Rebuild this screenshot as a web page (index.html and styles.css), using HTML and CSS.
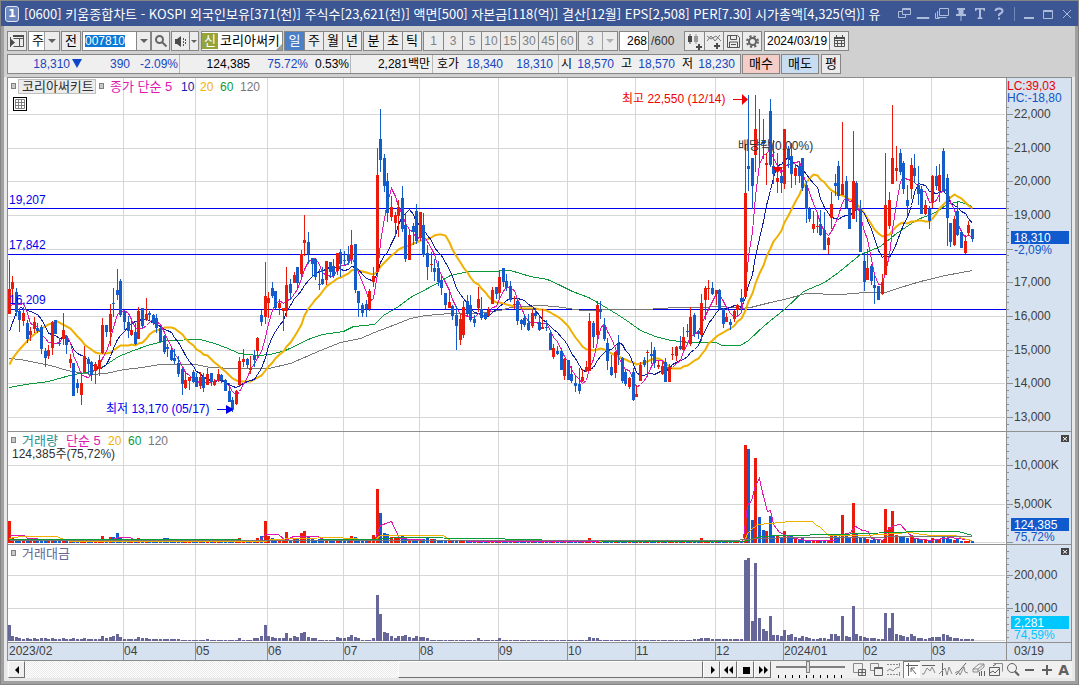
FILE: index.html
```html
<!DOCTYPE html>
<html lang="ko">
<head>
<meta charset="utf-8">
<title>키움종합차트</title>
<link rel="stylesheet" href="styles.css">
</head>
<body>
<div class="window">
  <header class="titlebar">
    <span class="badge">1</span>
    <h1 class="title">[0600] 키움종합차트 - KOSPI 외국인보유[371(천)] 주식수[23,621(천)] 액면[500] 자본금[118(억)] 결산[12월] EPS[2,508] PER[7.30] 시가총액[4,325(억)] 유</h1>
    <div class="winbtns">
      <button aria-label="창 분리"><svg width="14" height="14"><path d="M5.500 1.500h8v6h-8zM5 4.500H1.500v6h7V8M5.500 2.500h8"/></svg></button>
      <button aria-label="접기"><svg width="14" height="14"><path d="M1 10.500h12v1H1z"/></svg></button>
      <button aria-label="복제"><svg width="14" height="14"><path d="M4.500 1.500h9v7h-9zM2.500 4v6.500h9M.500 6v5.500h4"/></svg></button>
      <button aria-label="고정"><svg width="14" height="14"><path class="solid" d="M3 1h8v2H9.500v4H12v2H2V7h2.500V3H3zM6.500 9h1v5h-1z"/></svg></button>
      <button aria-label="글꼴"><svg width="14" height="14"><path class="solid" d="M2 1h10v3h-1l-1-1.500H8V10l1.500 1v1h-5v-1L6 10V2.500H4L3 4H2z"/></svg></button>
      <button aria-label="도움말"><svg width="14" height="14"><path class="thick" d="M3.500 4Q3.500 1.500 7 1.500T10.500 4Q10.500 5.500 8.500 6.500T7 9M7 10.500v2"/></svg></button>
      <i class="sep"></i>
      <button aria-label="최소화"><svg width="14" height="14"><path class="solid" d="M2 10h10v2H2z"/></svg></button>
      <button aria-label="최대화"><svg width="14" height="14"><path d="M2.500 3.500h9v8h-9zM2 4.500h10"/></svg></button>
      <button aria-label="닫기"><svg width="14" height="14"><path d="M3 3l8 8M11 3l-8 8"/></svg></button>
    </div>
  </header>

  <main class="content">
    <section class="tools">
      <div class="row">
        <button class="box sq" aria-label="메뉴"><svg width="16" height="14"><path class="g" d="M4.500 2.500h10v10h-10M4.500 4.500h10M10.500 5v7"/><path class="gs" d="M4 1h11v2H4zM1 3h1v10H1zM2 5l4 3.500L2 12z"/></svg></button>
        <div class="combo white w-a"><select aria-label="종목 구분"><option>주</option></select><span class="arrow"></span></div>
        <button class="box sq">전</button>
        <div class="group white code"><input type="text" value="007810" aria-label="종목코드"><button aria-label="목록"><span class="tri"></span></button></div>
        <button class="box sq find" aria-label="검색"><svg width="14" height="14"><circle class="g2" cx="5.500" cy="5.500" r="3.500"/><path class="g2" d="M8 8l4.500 4.500"/></svg></button>
        <div class="group sound"><button aria-label="소리"><svg width="15" height="14"><path class="gs" d="M2 5h2l4-3v11L4 10H2z"/><path class="g dash" d="M10.500 4v8M12.500 5v6"/></svg></button><button aria-label="소리 목록"><span class="tri sm"></span></button></div>
        <div class="box white name"><b>신</b><span>코리아써키</span><i></i></div>
        <div class="group seg"><button class="on">일</button><button>주</button><button>월</button><button>년</button></div>
        <div class="group seg"><button>분</button><button>초</button><button>틱</button></div>
        <div class="group seg dim"><button>1</button><button>3</button><button>5</button><button>10</button><button>15</button><button>30</button><button>45</button><button>60</button></div>
        <div class="combo dim w-b"><select aria-label="분 주기"><option>3</option></select><span class="arrow"></span></div>
        <label class="count"><input class="box white" type="text" value="268" aria-label="봉 개수"><span>/600</span></label>
        <div class="group seg icons">
          <button aria-label="차트 추가"><svg width="17" height="17"><path class="gs" d="M2 3h4v6H2zM3.500 1h1v10h-1z"/><path class="gl" d="M8 3h4v6H8zM9.500 1h1v10h-1z"/><path class="gs" d="M10 13h6v2h-6zM12 11h2v6h-2z"/></svg></button>
          <button aria-label="지표 추가"><svg width="17" height="17"><path class="g thin" d="M1 8l4-5 4 5 5-6M1 3l4 3 5-3 5 5"/><path class="gs" d="M8 12h6v2H8zM10 10h2v6h-2z"/></svg></button>
          <button aria-label="저장"><svg width="17" height="17"><path class="g" d="M2.500 2.500h10l2 2v10h-12zM5.500 2.500v4h6v-4M4.500 14v-5h8v5M6 11.500h5"/></svg></button>
          <button aria-label="설정"><svg width="17" height="17"><circle class="gear" cx="8.500" cy="8.500" r="5"/><circle class="g2" cx="8.500" cy="8.500" r="3.500"/></svg></button>
        </div>
        <div class="group white date"><input type="text" value="2024/03/19" aria-label="날짜"><button aria-label="달력"><svg width="13" height="13"><path class="g" d="M1.500 2.500h10v9h-10zM1 5.500h11M4.500 6v5M8.500 6v5M1 8.500h10"/><path class="gs" d="M1 2h11v2H1zM3 0h1v2H3zM9 0h1v2H9z"/></svg></button></div>
      </div>
      <div class="row">
        <div class="quote box">
          <div class="cell c1 down"><span>18,310<i class="fall"></i></span><span>390</span><span>-2.09%</span></div>
          <div class="cell c2"><span>124,385</span><span class="down">75.72%</span><span>0.53%</span></div>
          <div class="cell c3"><span>2,281백만</span></div>
          <div class="cell c4"><span>호가</span><span class="down">18,340</span><span class="down">18,310</span></div>
          <div class="cell c5"><span>시</span><span class="down">18,570</span><span>고</span><span class="down">18,570</span><span>저</span><span class="down">18,230</span></div>
        </div>
        <button class="box buy">매수</button>
        <button class="box sell">매도</button>
        <button class="box sq">평</button>
      </div>
    </section>

    <section class="frame">
      <div class="panel price">
        <svg class="plot" viewBox="8 78 998 353" preserveAspectRatio="none" id="price">
          <g class="grid" id="price-grid"></g>
          <g class="levels"><path d="M8 208.500h998M8 254.500h998M8 309.500h998"/></g>
          <g id="price-data"></g>
          <g class="blue"><text x="9" y="204">19,207</text><text x="9" y="249">17,842</text><text x="9" y="304">16,209</text><text x="106" y="413">최저 13,170 (05/17)</text><path d="M217 409h9v-4l8 4.500-8 4.500v-4h-9z"/></g>
          <g class="red"><text x="622" y="103">최고 22,550 (12/14)</text><path d="M733 99h9v-5l6 5.500-6 5.500v-5h-9zM772 167h11l-5.500 6z"/></g>
          <text class="dark" x="738" y="150">배당락(0.00%)</text>
          <g class="mark"><rect x="11.500" y="83.500" width="4" height="5"/><rect x="99.500" y="83.500" width="4" height="5"/></g>
          <rect class="tag" x="18.500" y="79.500" width="77" height="14"/>
          <text class="dark ko" x="22" y="91">코리아써키트</text>
          <text class="t5 ko" x="110" y="91">종가 단순 5</text><text class="t10" x="181" y="91">10</text><text class="t20" x="200" y="91">20</text><text class="t60" x="220" y="91">60</text><text class="t120" x="240" y="91">120</text>
          <g class="tableicon"><rect x="13.500" y="97.500" width="13" height="13"/><path d="M15.500 99.500h9v9h-9zM15.500 102.500h9M15.500 105.500h9M18.500 99.500v9M21.500 99.500v9"/></g>
        </svg>
        <svg class="axis" viewBox="1007 78 64 353" id="price-axis">
          <text class="red" x="1007" y="90">LC:39,03</text><text class="down" x="1007" y="102">HC:-18,80</text>
          <text class="down" x="1014" y="254">-2,09%</text>
          <rect class="now" x="1011" y="231" width="58" height="13"/><text class="white" x="1014" y="242">18,310</text>
        </svg>
      </div>
      <div class="panel volume">
        <svg class="plot" viewBox="8 432 998 112" preserveAspectRatio="none">
          <g class="grid" id="volume-grid"></g>
          <g id="volume-data"></g>
          <g class="mark"><rect x="11.500" y="437.500" width="4" height="5"/></g>
          <text class="teal ko" x="22" y="445">거래량</text><text class="t5 ko" x="66" y="445">단순 5</text><text class="t20" x="108" y="445">20</text><text class="t60" x="128" y="445">60</text><text class="t120" x="148" y="445">120</text>
          <text class="dark" x="12" y="458">124,385주(75,72%)</text>
        </svg>
        <svg class="axis" viewBox="1007 432 64 112" id="volume-axis">
          <text class="down" x="1014" y="541">75,72%</text>
          <rect class="now" x="1011" y="518" width="58" height="13"/><text class="white" x="1014" y="529">124,385</text>
          <rect class="xbox" x="1061" y="435" width="8" height="7"/><path class="xmark" d="M1063 437l4 3.500M1067 437l-4 3.500"/>
        </svg>
      </div>
      <div class="panel amount">
        <svg class="plot" viewBox="8 545 998 97" preserveAspectRatio="none">
          <g class="grid" id="amount-grid"></g>
          <g id="amount-data" class="amt"></g>
          <g class="mark"><rect x="11.500" y="550.500" width="4" height="5"/></g>
          <text class="amt ko" x="22" y="558">거래대금</text>
        </svg>
        <svg class="axis" viewBox="1007 545 64 97" id="amount-axis">
          <text class="cyan" x="1014" y="639">74,59%</text>
          <rect class="cyan" x="1011" y="616" width="58" height="13"/><text class="white" x="1014" y="627">2,281</text>
          <rect class="xbox" x="1061" y="548" width="8" height="7"/><path class="xmark" d="M1063 550l4 3.500M1067 550l-4 3.500"/>
        </svg>
      </div>
      <div class="panel time">
        <svg class="plot" viewBox="8 643 998 17" preserveAspectRatio="none" id="time"></svg>
        <svg class="axis" viewBox="1007 643 64 17"><text class="lab" x="1014" y="655">03/19</text></svg>
      </div>
    </section>

    <footer class="bottom">
      <div class="scroll">
        <button aria-label="왼쪽"><svg width="14" height="14"><path d="M9 3v8L5 7z"/></svg></button>
        <div class="track"><div class="thumb"></div></div>
        <button aria-label="오른쪽"><svg width="14" height="14"><path d="M6 3v8l4-4z"/></svg></button>
        <button aria-label="처음"><svg width="14" height="14"><path d="M6 3v8L2 7zM11 3v8L7 7z"/></svg></button>
        <button aria-label="정지"><svg width="14" height="14"><path d="M4 4h7v7H4z"/></svg></button>
        <button aria-label="끝"><svg width="14" height="14"><path d="M3 3v8l4-4zM8 3v8l4-4z"/></svg></button>
      </div>
      <div class="zoombar"><input type="range" min="0" max="100" value="46" aria-label="확대 비율"></div>
      <div class="draw">
        <button aria-label="새 창"><svg width="16" height="16"><path d="M1.500 1.500h9v9h-9z"/><path class="d" d="M6.500 7.500h7v6h-7zM10 7v7M6 10.500h8"/></svg></button>
        <button aria-label="겹침"><svg width="16" height="16"><path d="M1.500 1.500h8v7h-8z"/><path class="d fill" d="M5.500 5.500h8v8h-8zM5 6.500h9"/></svg></button>
        <button aria-label="구간"><svg width="16" height="16"><path class="dot" d="M1 2.500h13M1 12.500h13"/><path d="M1 9l3-2 3 2 3-3 4-1M13.500 1v3M13.500 10v4"/></svg></button>
        <button class="on" aria-label="선택"><svg width="16" height="16"><path class="d" d="M2 3.500h12M4.500 1v13M7 6l5 6M7 10V6h4"/></svg></button>
        <button aria-label="수평선"><svg width="16" height="16"><path class="d" d="M1 3.500h13"/><path d="M1 12h2l3-6 3 3 2-4 3 6"/></svg></button>
        <button aria-label="수직선"><svg width="16" height="16"><path class="d" d="M4.500 1v13"/><path d="M1 12l3-3 3-3 2 7 2-8 3 7"/></svg></button>
        <button aria-label="추세선"><svg width="16" height="16"><path class="d" d="M2 13L12 1"/><path d="M1 11l3-2 2 4 4-8 1 5 3 1"/></svg></button>
        <button aria-label="지우기"><svg width="16" height="16"><path d="M2 7l6-5h5v3l-6 5H2zM2 7h5v3M7 7l6-5"/><path class="d" d="M8.500 10v4M10.500 9v5M13.500 9v5"/></svg></button>
        <button aria-label="차트 비교"><svg width="16" height="16"><path d="M5.500 1.500h9v8"/><path class="d" d="M1.500 5.500h10v8h-10zM2 11l3-2 2 2 4-4M5 4l3-2"/></svg></button>
        <button aria-label="돋보기"><svg width="16" height="16"><circle class="d" cx="7" cy="6" r="4.500"/><path class="w" d="M10 9.500l4 4"/></svg></button>
        <button aria-label="축소"><svg width="16" height="16"><path class="w" d="M3 8h9"/></svg></button>
        <button aria-label="확대"><svg width="16" height="16"><path class="w" d="M3 8h10M8 3v10"/></svg></button>
        <button class="auto">A</button>
      </div>
    </footer>
  </main>
</div>
<script src="chart.js"></script>
</body>
</html>
```

FILE: styles.css
```css
* { box-sizing: border-box; }
body, button, input, select, svg text {
  font-family: "Liberation Sans", "Noto Sans CJK KR", sans-serif;
  font-size: 12px;
  font-weight: 400;
}
body { margin: 0; color: #000; line-height: 16px; }
button, input, select { margin: 0; padding: 0; border: 0; background: none; color: inherit; line-height: 16px; border-radius: 0; }
button { display: flex; align-items: center; justify-content: center; }
svg { display: block; flex: none; }

.window { min-height: 100vh; border: 1px solid #858585; background: #e8e8e8; display: flex; flex-direction: column; }
.titlebar { height: 25px; background: #3b5692; color: #fff; display: flex; align-items: center; padding: 0 4px; }
.badge { width: 14px; height: 16px; border: 1px solid #e0e6f4; border-radius: 3px; background: #6f88bd; font: bold 11px/14px "DejaVu Sans", sans-serif; text-align: center; flex: none; }
.title { margin: 0 0 0 5px; flex: 1; min-width: 0; overflow: hidden; white-space: nowrap; font: 400 13px/20px "Noto Sans CJK KR", sans-serif; }
.winbtns { display: flex; align-items: center; gap: 5px; margin-left: 5px; }
.winbtns svg { fill: none; stroke: #aebcdc; }
.winbtns .solid { fill: #aebcdc; stroke: none; }
.winbtns .thick { stroke-width: 2; }
.sep { width: 1px; height: 14px; margin: 0 2px 0 3px; background: #7289b8; }
.winbtns button { width: 14px; }

.content { flex: 1; border: 3px solid #a0a0a0; border-top: 0; padding-bottom: 3px; }
.tools { background: #d0d0d0; padding: 5px 3px 2px; display: flex; flex-direction: column; gap: 3px; height: 51px; }
.row { display: flex; gap: 1px; height: 20px; }
.row button, .row select, .name { font-size: 13px; }
.box, .group, .combo { border: 1px solid #868686; background: #ececec; height: 20px; flex: none; }
.box.white, .group.white, .combo.white { background: #fff; }
.sq { width: 20px; }
.group { display: flex; }
.group button { background: #ececec; border-left: 1px solid #868686; height: 18px; }
.group button:first-child { border-left: 0; }
.combo { position: relative; }
.combo select { appearance: none; width: 100%; height: 18px; padding-left: 3px; opacity: 1; }
.arrow { position: absolute; top: 0; right: 0; width: 15px; height: 18px; border-left: 1px solid #a0a0a0; background: #ececec; pointer-events: none; }
.arrow::after, .tri { content: ""; display: block; width: 0; border: 4px solid transparent; border-top-color: #606060; border-bottom: 0; }
.arrow::after { margin: 7px 0 0 3px; }
.tri.sm { border-width: 3px 3px 0; }
.w-a { width: 32px; }
.w-b { width: 40px; }
.row .w-b select { padding-left: 8px; font-size: 12px; }
.dim { color: #808080; }
.dim .arrow::after { border-top-color: #b0b0b0; }
.code { width: 69px; }
.code input { width: 53px; padding-left: 2px; color: #fff; background: linear-gradient(#0a78d6, #0a78d6) 2px 3px / 40px 12px no-repeat #fff; }
.code button { width: 14px; }
.find { width: 19px; margin-left: -1px; }
.sound { width: 28px; }
.sound button:first-child { width: 17px; }
.sound button:last-child { width: 9px; }
.name { width: 82px; display: flex; align-items: center; overflow: hidden; position: relative; white-space: nowrap; margin-left: 1px; }
.name b { width: 16px; height: 16px; background: #94a33a; color: #fff; font-weight: 400; text-align: center; flex: none; margin-right: 2px; }
.name i { position: absolute; right: 0; bottom: 0; border: 3px solid #a0a0a0; border-top-color: transparent; border-left-color: transparent; }
.seg button { width: 19px; }
.seg .on { background: #4a80c8; color: #fff; }
.row .dim button { font-size: 12px; }
.count { display: flex; align-items: center; width: 64px; }
.count input { width: 30px; text-align: right; padding-right: 1px; }
.count span { margin-left: 2px; color: #333; }
.icons { width: 78px; }
.date { width: 85px; margin-left: 1px; }
.date input { width: 64px; padding-left: 2px; }
.date button { width: 19px; }
.tools svg { fill: none; }
.tools .g { stroke: #555; }
.tools .g2 { stroke: #666; stroke-width: 2; }
.tools .thin { stroke: #777; }
.tools .dash { stroke-dasharray: 2 1; }
.tools .gs { fill: #4a4a4a; }
.tools .gl { fill: #999; }
.tools .gear { stroke: #666; stroke-width: 3; stroke-dasharray: 2 2; }

.quote { width: 734px; display: flex; white-space: nowrap; background: #efefef; line-height: 18px; }
.cell { display: grid; border-right: 1px solid #b8b8b8; text-align: right; }
.cell:last-child { border: 0; }
.c1 { width: 172px; grid-template-columns: 74px 48px 48px; }
.c2 { width: 171px; grid-template-columns: 70px 58px 41px; }
.c3 { width: 82px; grid-template-columns: 79px; }
.c4 { width: 126px; grid-template-columns: 26px 44px 50px; }
.c5 { grid-template-columns: 13px 42px 18px 43px 18px 42px; }
.down { color: #1646c0; fill: #0f55c8; }
.fall { display: inline-block; margin-left: 2px; border: 5px solid transparent; border-top: 9px solid #0f46c8; border-bottom: 0; }
.buy, .sell { width: 38px; background: #f4cdc8; }
.sell { background: #c8ddf2; margin-right: 1px; }

.frame { margin: 0 3px; border: 1px solid #8c8c8c; background: #fff; }
.panel { display: flex; border-bottom: 1px solid #909090; }
.panel:last-child { border-bottom: 0; }
.plot { flex: 1 1 0; min-width: 0; }
.axis { width: 65px; border-left: 1px solid #909090; background: #d7e2f0; }
.panel.price svg { height: 353px; }
.panel.volume svg { height: 112px; }
.panel.amount svg { height: 97px; }
.panel.time svg { height: 17px; }
.panel.time { background: #d7e2f0; }
svg .ko { font-size: 13px; }
.grid path { stroke: #d6d6d6; fill: none; }
.levels path { stroke: #0000f0; }
.blue { fill: #0000f0; }
.red { fill: #f00000; }
.dark { fill: #303030; }
.lab { fill: #404040; }
text.white { fill: #fff; }
.teal { fill: #2a8f8f; }
.cyan { fill: #00c8ff; }
.now { fill: #0f5acd; }
.amt { fill: #666698; }
.up-bar { fill: #eb1b0c; }
.down-bar { fill: #145ccc; }
.mark rect { fill: #c8c8c8; stroke: #808080; }
.tag { fill: #ececec; stroke: #c0c0c0; }
.tableicon rect { fill: #fff; stroke: #000; }
.tableicon path { fill: none; stroke: #808080; }
.xbox { fill: #444; }
.xmark { stroke: #fff; }
.t5 { fill: #e016b0; }
.t10 { fill: #1020a8; }
.t20 { fill: #f0b000; }
.t60 { fill: #0a9a3a; }
.t120 { fill: #777; }
.line { fill: none; shape-rendering: crispEdges; }
.line.t5 { stroke: #e016b0; }
.line.t10 { stroke: #1020a0; }
.line.t20 { stroke: #f0b000; }
.line.t60 { stroke: #0a9a3a; }
.line.t120 { stroke: #777; }
.line.bold { stroke-width: 2; shape-rendering: auto; }
.tick { stroke: #909090; }

.bottom { display: flex; height: 17px; margin: 0 3px; background: #f0f0f0; }
.scroll { flex: 1; display: flex; padding-left: 1px; }
.scroll button { width: 17px; background: #f0f0f0; border: 1px solid #fff; border-right-color: #707070; border-bottom-color: #707070; }
.track { flex: 1; display: flex; justify-content: flex-end; background: conic-gradient(#fff 25%, #eaeaea 0 50%, #fff 0 75%, #eaeaea 0) 0 0 / 2px 2px; }
.thumb { width: 45%; min-width: 20px; background: #efefef; border: 1px solid #fff; border-right-color: #707070; border-bottom-color: #707070; }
.zoombar { width: 79px; padding: 0 5px; background: repeating-linear-gradient(90deg, #000 0 1px, transparent 1px 7px) 7px 14px / 68px 3px no-repeat; }
.zoombar input { appearance: none; display: block; width: 69px; height: 12px; background: linear-gradient(#808080, #808080) 0 5px / 100% 2px no-repeat; }
.zoombar input::-webkit-slider-thumb { appearance: none; width: 4px; height: 12px; background: #e0e0e0; border: 1px solid #808080; }
.draw { display: flex; width: 222px; padding-left: 2px; }
.draw button { flex: 1; height: 17px; }
.draw .on { background: #fff; border-left: 1px solid #808080; border-top: 1px solid #808080; }
.draw svg { fill: none; stroke: #8a8a8a; }
.draw .d { stroke: #606060; }
.draw .fill { fill: #f0f0f0; }
.draw .dot { stroke-dasharray: 2 1; }
.draw .w { stroke: #606060; stroke-width: 2; }
.draw .auto { font: bold 14px/16px "DejaVu Sans", sans-serif; color: #606060; }
```

FILE: chart.js
```js
// x, high, body top, body bottom, low, direction (1 = up, 0 = down)
const candles = [
[9,260,289,314,314,1],[12,276,282,289,303,1],[16,288,292,312,316,0],[19,308,311,320,332,0],[23,307,313,321,326,1],[27,320,323,339,343,0],[30,327,331,335,341,1],[34,317,322,329,333,1],[37,323,328,331,333,0],[41,325,327,349,354,0],
[45,348,351,358,367,0],[48,345,350,356,359,1],[52,321,322,348,355,1],[55,320,320,334,334,0],[59,338,343,344,346,0],[63,313,330,339,345,1],[66,335,336,345,354,0],[70,354,359,363,368,1],[73,363,363,396,396,0],[77,379,383,388,393,0],
[81,373,383,395,405,1],[84,346,356,372,372,1],[88,357,359,364,374,0],[91,361,362,375,381,0],[95,362,364,371,384,1],[99,355,360,369,376,1],[102,318,325,353,354,1],[106,325,325,332,337,0],[110,304,314,332,346,1],[113,288,303,304,317,0],
[117,269,290,295,300,0],[120,279,281,315,317,0],[124,311,311,322,330,0],[128,316,322,331,338,0],[131,321,330,335,336,1],[135,323,332,344,345,0],[138,307,311,339,339,1],[142,308,308,326,328,0],[146,298,314,320,321,1],[149,311,313,315,320,0],
[153,314,315,323,325,0],[156,314,318,328,333,0],[160,327,328,342,342,0],[164,335,336,352,354,0],[167,344,347,349,357,0],[171,346,350,360,361,0],[174,349,358,361,364,0],[178,356,363,374,377,0],[182,368,369,384,395,0],[185,371,380,388,389,1],
[189,377,377,381,390,1],[193,370,372,382,383,0],[196,373,377,387,387,0],[200,372,377,386,389,1],[203,373,377,388,392,0],[207,368,374,385,385,1],[211,373,373,382,386,0],[214,379,381,385,386,1],[218,369,374,381,382,1],[221,374,375,380,383,0],
[225,379,380,391,391,0],[229,383,391,402,402,0],[232,397,400,409,412,0],[236,390,391,404,405,1],[239,357,361,385,387,1],[243,349,359,362,367,1],[247,358,359,365,368,0],[250,356,368,370,374,1],[254,350,355,360,367,0],[257,337,338,351,357,1],
[261,310,315,322,326,0],[265,262,296,317,324,1],[268,292,298,303,318,1],[272,282,288,296,298,0],[275,291,291,308,309,0],[279,299,303,308,315,1],[283,308,308,311,331,1],[286,267,285,311,317,1],[290,279,284,293,300,0],[294,272,275,283,283,1],
[297,267,267,283,288,0],[301,250,254,274,278,1],[304,215,240,243,256,1],[308,232,242,254,264,0],[312,258,258,264,277,0],[315,258,259,277,280,0],[319,269,284,285,290,0],[322,267,279,284,285,0],[326,261,261,280,285,1],[330,262,262,272,278,0],
[333,259,266,276,278,0],[337,253,253,271,275,1],[340,249,252,264,277,0],[344,251,260,261,265,0],[348,246,254,261,265,0],[351,230,245,259,264,1],[355,244,244,290,293,0],[358,291,291,303,317,0],[362,303,305,313,317,0],[366,300,304,309,317,0],
[369,289,291,309,311,1],[373,267,276,282,287,1],[377,148,175,272,272,1],[380,109,139,160,172,0],[384,154,158,186,192,0],[387,173,181,213,222,0],[391,196,207,217,221,1],[395,212,215,223,237,1],[398,200,207,216,237,1],[402,186,198,229,232,0],
[405,214,225,259,262,0],[409,229,235,260,260,1],[413,223,226,232,245,0],[416,204,211,241,244,0],[420,212,212,238,241,1],[423,213,225,255,257,0],[427,245,253,267,280,0],[431,252,264,265,272,1],[434,259,268,272,281,0],[438,261,268,282,286,0],
[441,276,280,288,295,0],[445,293,293,305,309,0],[449,289,302,308,308,1],[452,305,306,316,320,0],[456,306,315,326,350,0],[460,314,319,340,345,1],[463,301,307,335,338,1],[467,295,301,314,317,0],[470,295,305,320,322,0],[474,315,319,323,327,0],
[478,287,299,308,312,1],[481,297,309,318,320,0],[485,313,313,319,320,0],[488,307,310,316,316,1],[492,287,290,304,304,1],[496,287,287,294,299,0],[499,270,277,293,298,1],[503,268,268,282,287,0],[506,274,281,287,291,0],[510,281,286,300,302,0],
[514,296,304,305,309,1],[517,300,301,321,325,0],[521,319,320,324,330,0],[524,315,318,325,327,0],[528,314,323,330,331,0],[532,310,313,326,328,1],[535,308,313,316,319,0],[539,316,322,330,331,0],[542,309,327,329,329,1],[546,320,327,328,331,0],
[550,330,333,350,350,0],[553,344,348,357,359,1],[557,346,351,354,355,0],[561,348,351,370,370,0],[564,358,359,376,380,1],[568,360,360,380,380,0],[571,366,374,381,383,0],[575,375,383,386,392,0],[579,368,384,391,394,0],[582,369,377,381,382,1],
[586,361,367,371,372,1],[589,313,321,371,371,1],[593,321,323,337,348,0],[597,301,305,335,340,1],[600,301,309,312,319,0],[604,318,326,339,341,0],[607,338,343,361,370,0],[611,355,367,375,376,0],[615,351,352,373,378,1],[618,335,344,355,365,0],
[622,357,358,381,383,0],[625,369,372,384,386,0],[629,377,378,387,389,1],[633,368,372,400,401,0],[636,385,394,397,397,1],[640,362,365,381,381,1],[644,357,360,365,367,0],[647,350,352,353,377,1],[651,342,354,356,364,0],[654,347,350,363,368,0],
[658,361,365,367,369,1],[662,362,366,374,375,1],[665,358,362,382,382,0],[669,364,367,382,382,1],[672,347,354,355,360,1],[676,346,347,356,361,1],[680,336,346,349,350,0],[683,327,337,350,350,1],[687,324,331,332,337,0],[690,307,317,344,346,1],
[694,313,315,334,337,0],[698,330,331,334,339,0],[701,294,303,335,341,1],[705,286,288,300,320,1],[708,280,288,289,300,1],[712,282,288,294,295,0],[716,290,290,294,305,1],[719,289,290,309,309,0],[723,308,309,324,328,0],[726,313,317,322,322,1],
[730,319,322,325,330,0],[734,310,311,319,322,1],[737,304,305,310,317,1],[741,289,298,302,308,0],[745,144,193,297,297,1],[748,95,166,169,191,0],[752,158,158,186,209,0],[755,95,129,155,172,1],[759,109,144,145,165,0],[763,119,141,144,159,0],
[766,153,163,165,185,1],[770,99,111,165,167,0],[773,140,166,174,184,0],[777,153,178,182,193,1],[781,167,176,183,193,0],[784,129,129,184,189,1],[788,146,149,158,168,0],[791,143,156,174,188,0],[795,164,168,176,185,1],[799,161,166,176,183,0],
[802,158,158,188,191,0],[806,181,185,209,223,0],[809,207,209,219,222,0],[813,211,224,229,233,1],[817,212,226,227,233,1],[820,210,224,235,236,0],[824,212,230,250,250,0],[828,237,238,245,254,1],[831,192,204,218,229,1],[835,174,183,186,196,0],
[838,161,166,196,200,0],[842,122,184,195,195,1],[846,176,181,208,209,0],[849,209,209,229,229,0],[853,131,181,219,219,1],[856,181,183,210,222,0],[860,200,209,252,252,0],[864,253,261,282,291,0],[867,249,268,280,280,1],[871,264,266,281,285,0],
[874,275,285,288,304,0],[878,286,286,300,300,0],[882,274,282,294,295,1],[885,153,205,275,275,1],[889,192,200,226,229,1],[892,105,158,184,184,1],[896,146,168,171,181,1],[900,149,153,172,175,0],[903,161,163,189,194,0],[907,185,200,206,216,0],
[911,158,165,189,199,1],[914,154,168,176,183,0],[918,166,185,194,205,0],[921,186,189,214,214,0],[925,200,205,214,215,1],[929,206,209,221,229,0],[932,175,176,202,208,1],[936,166,176,186,190,0],[939,164,175,191,202,1],[943,148,151,191,192,0],
[947,174,178,218,246,0],[950,223,223,242,247,0],[954,216,219,245,246,1],[957,201,211,235,236,0],[961,230,232,248,248,0],[965,235,241,253,254,1],[968,221,225,233,236,1],[972,229,229,239,242,0]
];

// bar heights that rise above the two-pixel floor
const volume = {9:22,12:5,16:4,102:7,110:6,113:6,117:10,120:5,128:4,138:5,164:5,167:5,239:5,257:5,261:7,265:22,268:7,272:5,275:4,286:11,290:3,294:4,297:4,301:10,304:12,308:6,312:4,315:3,319:4,322:3,337:3,351:7,355:6,358:4,373:8,377:54,380:30,384:10,387:9,391:6,395:5,398:5,402:7,405:6,409:4,413:3,416:4,420:4,423:4,427:5,431:4,434:4,589:5,690:3,701:5,745:98,748:94,752:23,755:85,759:26,763:13,766:12,770:27,773:8,777:7,781:5,784:12,788:7,791:8,795:4,799:3,802:5,806:3,830:8,834:8,838:6,842:28,846:8,849:6,853:40,856:10,860:6,864:5,867:4,871:3,874:4,878:3,885:34,889:16,892:32,896:8,900:7,903:6,907:5,911:8,914:5,918:4,921:3,925:3,929:3,932:5,936:3,939:4,943:7,947:5,950:4,954:3,957:4};
const amount = {9:16,12:5,16:4,19:3,27:3,34:3,41:3,45:3,52:3,63:3,73:3,84:3,102:5,106:3,110:4,113:5,117:7,120:4,138:4,142:3,146:3,207:2,239:3,254:3,257:3,261:5,265:16,268:5,272:4,275:3,279:3,283:3,286:8,290:3,294:5,297:4,301:8,304:9,308:4,312:3,315:3,337:4,340:3,344:3,348:4,351:6,355:4,358:3,373:3,377:46,380:27,384:9,387:8,391:5,395:3,398:5,402:5,405:6,409:4,413:3,416:5,420:4,423:4,427:3,478:3,499:3,589:4,593:3,597:3,701:3,705:3,708:3,745:81,748:83,752:20,755:78,759:23,763:12,766:10,770:25,773:6,777:6,781:5,784:11,788:6,791:7,795:4,799:3,802:5,806:4,809:3,820:3,824:3,830:7,834:7,838:5,842:25,846:5,849:4,853:35,856:7,860:5,864:4,867:3,871:3,874:3,885:28,889:13,892:28,896:7,900:6,903:5,907:4,911:7,914:5,918:3,921:3,929:3,932:4,936:4,939:4,943:7,947:6,950:4,954:3,957:3};

const NS = 'http://www.w3.org/2000/svg';
const el = id => document.getElementById(id);
function add(parent, tag, attrs, text, first) {
  const n = document.createElementNS(NS, tag);
  for (const k in attrs) n.setAttribute(k, attrs[k]);
  if (text) n.textContent = text;
  first ? parent.prepend(n) : parent.append(n);
}
const rect = (g, x, y, w, h, c) => add(g, 'rect', {x, y, width: w, height: Math.max(1, h), class: c});
const line = (g, pts, c) => add(g, 'polyline', {points: pts.map(p => p[0] + .5 + ',' + (p[1] + .5)).join(' '), class: 'line ' + c});
const pairs = s => s.trim().split(/\s+/).map(p => p.split(',').map(Number));

const months = [[123,'04'],[195,'05'],[267,'06'],[343,'07'],[419,'08'],[498,'09'],[567,'10'],[635,'11'],[715,'12'],[783,'2024/01'],[863,'02'],[931,'03']];
function grid(id, ys, top, h) {
  const v = months.map(m => `M${m[0] + .5} ${top}v${h}`).join('');
  add(el(id), 'path', {d: v + ys.map(y => `M8 ${y + .5}h997`).join('')});
}
grid('price-grid', [114,148,181,215,249,282,316,350,383,417], 78, 353);
grid('volume-grid', [465,504,542], 432, 112);
grid('amount-grid', [575,608,640], 545, 97);

// moving averages: seed points, then the mean of the closes
const close = candles.map(c => c[5] ? c[2] : c[3]);
function average(n, seed) {
  const pts = pairs(seed);
  for (let i = n - 1; i < close.length; i++) {
    const s = close.slice(i - n + 1, i + 1).reduce((a, b) => a + b, 0);
    pts.push([candles[i][0], Math.round(s / n)]);
  }
  return pts;
}
const p = el('price-data');
line(p, pairs('9,358 20,359 50,365 67,370 90,374 105,373 124,369 142,367 160,364 195,364 210,367 235,368 268,368 290,363 320,350 340,342 360,338 374,332 395,324 410,318 425,315 450,313 475,313 500,310 510,307 540,305 555,306 582,310 620,309 645,309 675,307 700,307 720,306 740,308 750,307 770,302 788,298 805,293 840,294 865,292 885,292 900,287 920,281 945,275 972,270'), 't120');
line(p, pairs('9,387 25,384 48,381 73,374 92,371 103,366 118,356 133,350 150,344 167,340 200,339 214,343 225,347 239,353 257,355 270,354 285,350 310,338 322,334 343,331 353,326 374,324 383,315 398,306 410,297 427,288 440,281 450,275 468,271 487,271 510,270 520,273 530,276 547,279 560,285 572,291 588,297 602,305 617,314 629,322 640,330 655,336 670,340 690,342 715,342 722,345 740,345 748,340 764,325 785,308 803,291 824,282 838,272 860,254 880,246 896,233 917,219 933,213 947,204 958,201 967,204 972,206'), 't60');
line(p, average(20, '9,364 12,358 19,349 30,337 41,328 48,324 57,321 70,328'), 't20 bold');
line(p, average(10, '9,331 16,311 20,307 30,311 37,314'), 't10');
line(p, average(5, '9,306 12,304 19,304'), 't5');
for (const [x, hi, t, b, lo, up] of candles) {
  const c = up ? 'up-bar' : 'down-bar';
  rect(p, x, hi, 1, lo - hi, c);
  rect(p, x - 1, t, 3, b - t, c);
}

function bars(id, map, base, cls) {
  const h = candles.map((c, i) => cls && i > 47 && i < 190 ? 1 : 2);
  for (const k in map) {
    const i = Math.round((k - 9) / 3.607);
    if (h[i] !== undefined) h[i] = map[k];
  }
  candles.forEach((c, i) => rect(el(id), c[0] - 1, base - h[i], 3, h[i], cls || (c[5] ? 'up-bar' : 'down-bar')));
}
bars('volume-data', volume, 543, '');
bars('amount-data', amount, 641, 'amt');
const v = el('volume-data');
line(v, pairs('9,535 24,535 27,538 70,540 110,540 118,537 130,537 134,540 160,541 258,541 265,534 278,534 285,540 293,536 317,536 325,540 374,540 380,525 391,521 399,538 430,540 500,541 742,541 743,538 747,505 751,500 755,485 759,478 762,492 767,511 770,510 773,524 779,532 790,537 805,540 835,540 840,535 850,532 855,526 862,530 868,531 871,538 883,540 887,530 893,525 900,524 907,532 914,538 930,540 950,537 972,540'), 't5');
line(v, pairs('9,538 20,536 56,536 61,538 70,541 265,541 270,539 300,538 335,537 365,539 375,539 380,535 443,535 450,540 744,541 747,533 752,528 758,524 770,523 790,521 812,521 815,524 820,527 828,535 860,535 885,534 893,533 910,532 915,533 930,535 955,535 962,538 972,540'), 't20');
line(v, pairs('9,539 216,539 265,540 375,539 398,537 486,538 560,540 640,541 744,541 760,536 780,535 840,534 860,533 897,532 915,531 958,531 972,535'), 't60');
line(v, pairs('9,540 730,540 750,539 755,538 800,537 972,536'), 't120');

function axis(id, labels, from, to, step) {
  const a = el(id);
  let d = '';
  for (let y = from; y < to; y += step) d += `M1007 ${Math.round(y) + .5}h2`;
  for (const [y, t] of labels) {
    d += `M1007 ${y + .5}h6`;
    if (t) add(a, 'text', {x: 1014, y: y + 4, class: 'lab'}, t, true);
  }
  add(a, 'path', {d, class: 'tick'}, '', true);
}
axis('price-axis', [[114,'22,000'],[148,'21,000'],[181,'20,000'],[215,'19,000'],[249,''],[282,'17,000'],[316,'16,000'],[350,'15,000'],[383,'14,000'],[417,'13,000']], 107, 430, 6.74);
axis('volume-axis', [[465,'10,000K'],[504,'5,000K'],[542,'']], 437, 542, 7);
axis('amount-axis', [[575,'200,000'],[608,'100,000']], 551, 640, 6.6);

const t = el('time');
add(t, 'path', {d: months.map(m => `M${m[0] + .5} 643v17`).join(''), class: 'tick'});
[[8, '2023/02'], ...months].forEach(m => add(t, 'text', {x: m[0] + 1, y: 655, class: 'lab'}, m[1]));
```
